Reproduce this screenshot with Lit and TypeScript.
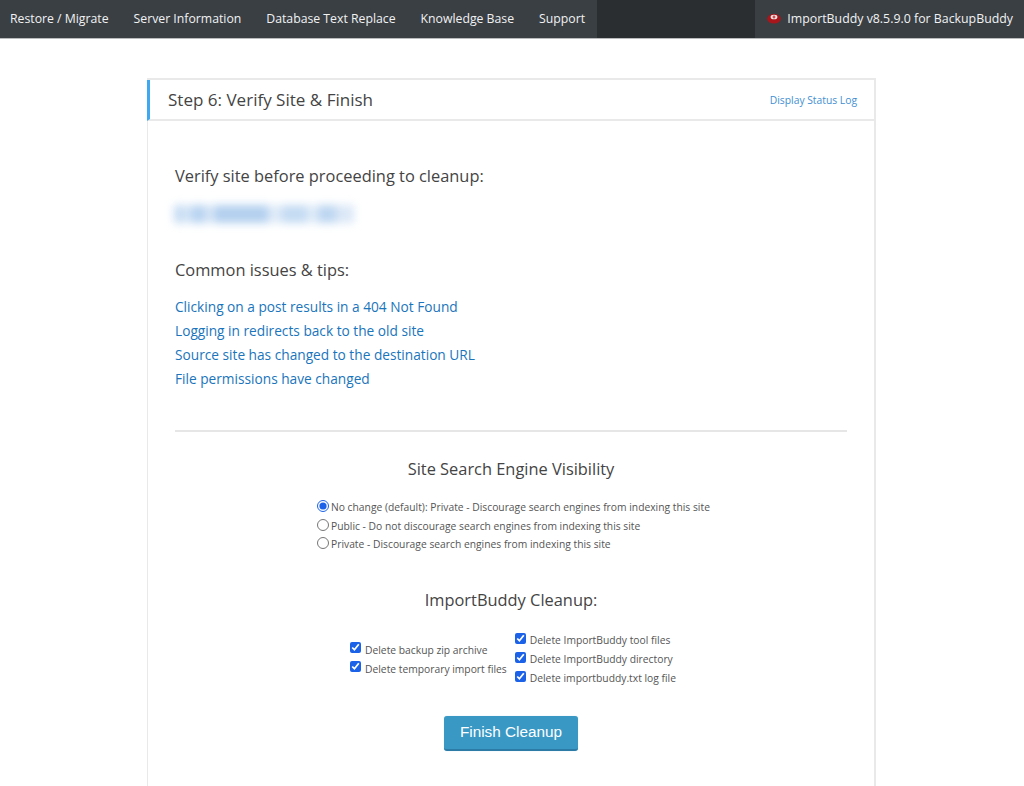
import { LitElement, html, css } from "lit";
import { customElement } from "lit/decorators.js";

@customElement("app-root")
export class AppRoot extends LitElement {
  static styles = css`
    :host { display: block; height: 786px; overflow: hidden; background: #fff; font-family: "Open Sans", sans-serif; color: #444; }
    * { box-sizing: border-box; }
    a { text-decoration: none; color: #1a75bc; }
    nav { display: flex; height: 39px; background: #3a3f44; border-bottom: 1px solid #b9bbbd; color: #fff; font-size: 12.25px; }
    .menu { display: flex; align-items: center; gap: 25px; padding: 0 12px 1px 10px; }
    .menu span { white-space: nowrap; color: #f1f2f3; }
    .spacer { flex: 1; background: #2b2e31; }
    .brand { display: flex; align-items: center; gap: 6px; padding: 0 11px 1px 12px; font-size: 12.35px; color: #f1f2f3; white-space: nowrap; }
    .card { margin: 39px 0 0 147px; width: 729px; height: 720px; border: 2px solid #e9e9e9; border-left-width: 1px; border-top-width: 2px; }
    .head { display: flex; align-items: center; justify-content: space-between; height: 41px; margin-left: -1px; border-left: 3px solid #3fa9f0; border-bottom: 2px solid #e9e9e9; padding: 0 17px 0 18px; }
    .head h1 { margin: 0; font-size: 17.05px; font-weight: 400; color: #444; }
    .head a { font-size: 10.3px; color: #3f8fd2; }
    .body { padding: 43px 27px 0 27px; }
    h2 { margin: 0; font-size: 16.4px; font-weight: 400; line-height: 24px; color: #444; }
    .blur { margin: 17px 0 0 -1px; width: 180px; height: 18px; filter: blur(4px); background: linear-gradient(90deg, #c6dcf3 0 6%, #e2edf9 6% 9%, #b9d4f1 9% 18%, #dbe8f7 18% 22%, #b3d0ef 22% 52%, #dfebf8 52% 60%, #c4dbf3 60% 74%, #e0ecf8 74% 80%, #bdd6f1 80% 90%, #dbe8f7 90% 100%); }
    .tips { margin-top: 35px; }
    .links { display: flex; flex-direction: column; margin-top: 13px; font-size: 13.7px; line-height: 24px; }
    hr { border: 0; border-top: 2px solid #e6e6e6; margin: 39px 0 0; }
    .center { text-align: center; }
    .vis { margin-top: 25px; }
    .radios { display: flex; flex-direction: column; width: max-content; margin: 17px 0 0 142px; font-size: 10.3px; line-height: 18.7px; }
    label { display: flex; align-items: center; white-space: nowrap; color: #555; }
    input { margin: 0; accent-color: #1b62e8; flex: none; }
    .radios input { width: 12px; height: 12px; margin: -3px 2px 0 0; }
    .clean { margin-top: 34px; }
    .checks { display: flex; align-items: center; margin: 19px 0 0 175px; font-size: 10.3px; line-height: 19px; gap: 8px; }
    .col { display: flex; flex-direction: column; }
    .checks input { width: 11px; height: 11px; margin: -5px 4px 0 0; }
    .btn { display: block; margin: 28px auto 0; width: 134px; height: 35px; padding: 0 0 2px; border: 0; border-bottom: 2px solid #2b7ba6; border-radius: 3px; background: #3a98c5; color: #fff; font-family: "Liberation Sans", sans-serif; font-size: 15.3px; box-shadow: 0 0 1px #a9d3e8; }
  `;

  render() {
    return html`
      <nav>
        <div class="menu">
          <span>Restore / Migrate</span><span>Server Information</span><span>Database Text Replace</span><span>Knowledge Base</span><span>Support</span>
        </div>
        <div class="spacer"></div>
        <div class="brand">
          <svg width="14" height="11" viewBox="0 0 14 11">
            <ellipse cx="7" cy="5.8" rx="6.9" ry="4.8" fill="#a8151b" />
            <ellipse cx="7" cy="4" rx="3.4" ry="2.3" fill="#efe9e9" />
            <path d="M6.4 2.6h1.2v.9h.9v1H7.6v.9H6.4v-.9h-.9v-1h.9z" fill="#c3252b" />
          </svg>
          <span>ImportBuddy v8.5.9.0 for BackupBuddy</span>
        </div>
      </nav>
      <section class="card">
        <header class="head"><h1>Step 6: Verify Site &amp; Finish</h1><a href="#">Display Status Log</a></header>
        <div class="body">
          <h2>Verify site before proceeding to cleanup:</h2>
          <div class="blur"></div>
          <h2 class="tips">Common issues &amp; tips:</h2>
          <div class="links">
            <a href="#">Clicking on a post results in a 404 Not Found</a>
            <a href="#">Logging in redirects back to the old site</a>
            <a href="#">Source site has changed to the destination URL</a>
            <a href="#">File permissions have changed</a>
          </div>
          <hr />
          <h2 class="center vis">Site Search Engine Visibility</h2>
          <div class="radios">
            <label><input type="radio" name="v" checked />No change (default): Private - Discourage search engines from indexing this site</label>
            <label><input type="radio" name="v" />Public - Do not discourage search engines from indexing this site</label>
            <label><input type="radio" name="v" />Private - Discourage search engines from indexing this site</label>
          </div>
          <h2 class="center clean">ImportBuddy Cleanup:</h2>
          <div class="checks">
            <div class="col">
              <label><input type="checkbox" checked />Delete backup zip archive</label>
              <label><input type="checkbox" checked />Delete temporary import files</label>
            </div>
            <div class="col">
              <label><input type="checkbox" checked />Delete ImportBuddy tool files</label>
              <label><input type="checkbox" checked />Delete ImportBuddy directory</label>
              <label><input type="checkbox" checked />Delete importbuddy.txt log file</label>
            </div>
          </div>
          <button class="btn">Finish Cleanup</button>
        </div>
      </section>
    `;
  }
}
